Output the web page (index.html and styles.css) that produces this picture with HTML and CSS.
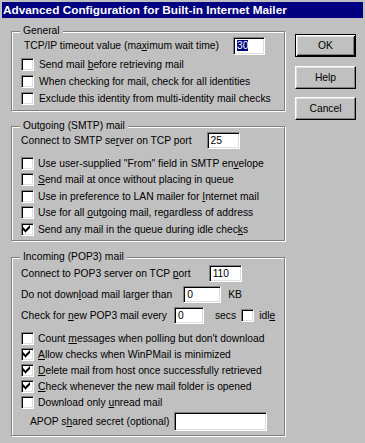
FILE: index.html
```html
<!DOCTYPE html>
<html lang="en">
<head>
    <meta charset="UTF-8">
    <title>Advanced Configuration for Built-in Internet Mailer</title>
    <link rel="stylesheet" href="styles.css">
</head>
<body>
    <div class="dialog">
        <div class="titlebar">Advanced Configuration for Built-in Internet Mailer</div>

        <div class="dialog-body">
            <div class="settings">
                <!-- General -->
                <div class="group group-general">
                    <span class="group-title">General</span>
                    <div class="field-row field-tcp">
                        <span>TCP/IP timeout value (ma<u>x</u>imum wait time)</span>
                        <span class="textbox tb-timeout"><span class="selected">30</span></span>
                    </div>
                    <label class="check-row"><span class="checkbox"></span><span>Send mail <u>b</u>efore retrieving mail</span></label>
                    <label class="check-row"><span class="checkbox"></span><span>When checking for mail, check for all identities</span></label>
                    <label class="check-row"><span class="checkbox"></span><span>Exclude this identity from multi-identity mail checks</span></label>
                </div>

                <!-- Outgoing -->
                <div class="group group-smtp">
                    <span class="group-title">Outgoing (SMTP) mail</span>
                    <div class="field-row field-smtp-port">
                        <span>Connect to SMTP se<u>r</u>ver on TCP port</span>
                        <span class="textbox tb-smtp">25</span>
                    </div>
                    <div class="check-list">
                        <label class="check-row"><span class="checkbox"></span><span>Use user-supplied "From" field in SMTP en<u>v</u>elope</span></label>
                        <label class="check-row"><span class="checkbox"></span><span><u>S</u>end mail at once without placing in queue</span></label>
                        <label class="check-row"><span class="checkbox"></span><span>Use in preference to LAN mailer for <u>I</u>nternet mail</span></label>
                        <label class="check-row"><span class="checkbox"></span><span>Use for all <u>o</u>utgoing mail, regardless of address</span></label>
                        <label class="check-row"><span class="checkbox checked"></span><span>Send any mail in the queue during idle chec<u>k</u>s</span></label>
                    </div>
                </div>

                <!-- Incoming -->
                <div class="group group-pop3">
                    <span class="group-title">Incoming (POP3) mail</span>
                    <div class="field-row">
                        <span>Connect to POP3 server on TCP <u>p</u>ort</span>
                        <span class="textbox tb-pop3">110</span>
                    </div>
                    <div class="field-row">
                        <span>Do not down<u>l</u>oad mail larger than</span>
                        <span class="textbox tb-size">0</span>
                        <span class="unit">KB</span>
                    </div>
                    <div class="field-row">
                        <span>Check for <u>n</u>ew POP3 mail every</span>
                        <span class="textbox tb-every">0</span>
                        <span class="unit unit-secs">secs</span>
                        <label class="idle"><span class="checkbox"></span><span>idl<u>e</u></span></label>
                    </div>
                    <div class="check-list">
                        <label class="check-row"><span class="checkbox"></span><span>Count <u>m</u>essages when polling but don't download</span></label>
                        <label class="check-row"><span class="checkbox checked"></span><span><u>A</u>llow checks when WinPMail is minimized</span></label>
                        <label class="check-row"><span class="checkbox checked"></span><span><u>D</u>elete mail from host once successfully retrieved</span></label>
                        <label class="check-row"><span class="checkbox checked"></span><span><u>C</u>heck whenever the new mail folder is opened</span></label>
                        <label class="check-row"><span class="checkbox"></span><span>Download only <u>u</u>nread mail</span></label>
                    </div>
                    <div class="field-row field-apop">
                        <span>APOP s<u>h</u>ared secret (optional)</span>
                        <span class="textbox tb-apop"></span>
                    </div>
                </div>
            </div>

            <div class="buttons">
                <button class="btn btn-default">OK</button>
                <button class="btn">Help</button>
                <button class="btn">Cancel</button>
            </div>
        </div>
    </div>
</body>
</html>
```

FILE: styles.css
```css
* {
    margin: 0;
    padding: 0;
    box-sizing: border-box;
}

body {
    background: #c0c0c0;
    font-family: "Liberation Sans", Arial, sans-serif;
    font-size: 10.3px;
    color: #000;
}

.dialog {
    width: 365px;
    height: 443px;
    padding: 2px 2px 0 2px;
    background: #c0c0c0;
}

.titlebar {
    height: 16px;
    padding-left: 1px;
    background: #000080;
    color: #fff;
    font-size: 11.8px;
    font-weight: bold;
    line-height: 16px;
    white-space: nowrap;
}

.dialog-body {
    display: flex;
    gap: 10px;
    padding: 13px 0 0 9px;
}

.settings {
    width: 274px;
}

/* group boxes */
.group {
    position: relative;
    border: 1px solid #808080;
    box-shadow: inset 1px 1px #fff, 1px 1px #fff;
    padding: 0 4px 0 9px;
}

.group-title {
    position: absolute;
    top: -7px;
    left: 8px;
    padding: 0 3px;
    background: #c0c0c0;
    line-height: 12px;
}

.group-general {
    height: 80px;
    padding-top: 4px;
    margin-bottom: 15px;
}

.group-smtp {
    height: 115px;
    padding-top: 5px;
    margin-bottom: 16px;
}

.group-pop3 {
    height: 179px;
    padding-top: 7px;
}

/* rows */
.field-row {
    display: flex;
    align-items: center;
    height: 17px;
    white-space: nowrap;
}

.field-tcp {
    height: 19px;
    margin-left: 3px;
}

.group-pop3 .field-row + .field-row {
    margin-top: 4px;
}

.group-pop3 .field-apop {
    height: 20px;
    margin-top: 1px;
    padding-left: 9px;
}

.check-row {
    display: flex;
    align-items: center;
    gap: 5px;
    height: 17px;
    white-space: nowrap;
}

.group-general .field-row + .check-row {
    margin-top: 1px;
}

.group-smtp .check-list {
    margin-top: 6px;
}

.group-smtp .check-row {
    height: 16.5px;
    gap: 4px;
}

.group-pop3 .check-list {
    margin-top: 6px;
}

.group-pop3 .check-row {
    height: 16px;
    gap: 4px;
}

/* sunken controls */
.textbox,
.checkbox {
    display: inline-block;
    background: #fff;
    border: 1px solid;
    border-color: #808080 #fff #fff #808080;
    box-shadow: inset 1px 1px #000, inset -1px -1px #dfdfdf;
}

.textbox {
    height: 17px;
    padding: 1px 0 0 3px;
    line-height: 14px;
}

.tb-timeout {
    width: 32px;
    height: 18px;
    margin-left: 14px;
}

.selected {
    background: #000080;
    color: #fff;
}

.tb-smtp {
    width: 33px;
    margin-left: 15px;
}

.tb-pop3 {
    width: 33px;
    margin-left: 18px;
}

.tb-size {
    width: 38px;
    margin-left: 11px;
}

.tb-every {
    width: 30px;
    margin-left: 7px;
}

.tb-apop {
    width: 93px;
    height: 19px;
    margin-left: 5px;
}

.unit {
    margin-left: 7px;
}

.unit-secs {
    margin-left: 11px;
}

.idle {
    display: flex;
    align-items: center;
    gap: 5px;
    margin-left: 5px;
}

.checkbox {
    width: 13px;
    height: 13px;
    flex: none;
}

.checkbox.checked {
    background: #fff url("data:image/svg+xml,%3Csvg xmlns='http://www.w3.org/2000/svg' width='11' height='11' viewBox='0 0 11 11'%3E%3Cpath d='M1 3.5h1v1h1v1h1v-1h1v-1h1v-1h1v-1h1v3h-1v1h-1v1h-1v1h-1v1h-1v-1h-1v-1h-1z' fill='%23000'/%3E%3C/svg%3E") no-repeat 0 0;
}

/* buttons */
.buttons {
    display: flex;
    flex-direction: column;
    gap: 8.5px;
    padding-top: 3px;
}

.btn {
    width: 61px;
    height: 23px;
    background: #c0c0c0;
    border: 1px solid;
    border-color: #fff #000 #000 #fff;
    box-shadow: inset -1px -1px #808080, inset 1px 1px #dfdfdf;
    font-family: "Liberation Sans", Arial, sans-serif;
    font-size: 10.3px;
    color: #000;
}

.btn-default {
    border-color: #000;
    box-shadow: inset 1px 1px #fff, inset -1px -1px #000, inset 2px 2px #dfdfdf, inset -2px -2px #808080;
}
```
